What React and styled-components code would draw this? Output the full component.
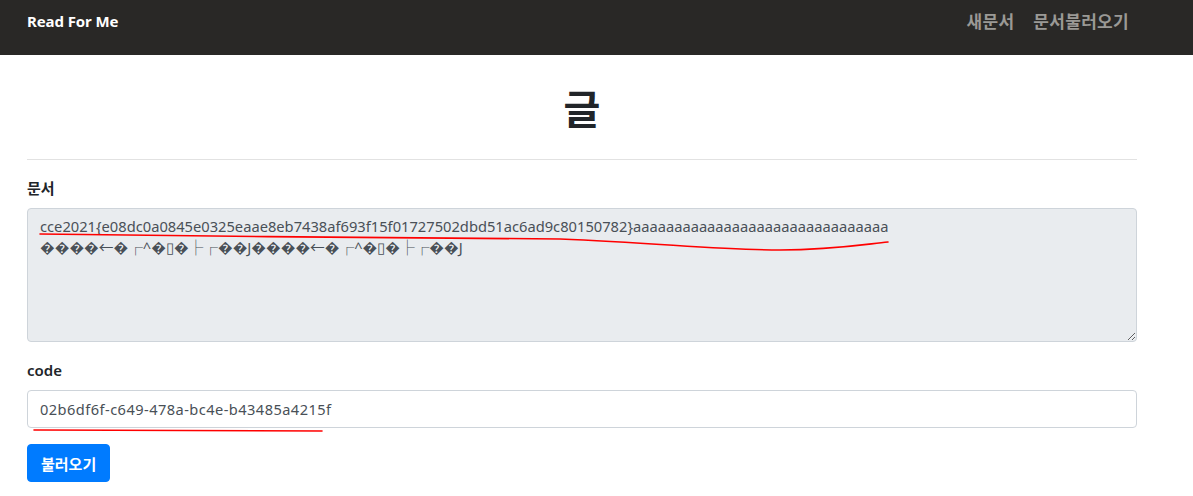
import React from 'react';
import styled, { createGlobalStyle } from 'styled-components';

const GlobalStyle = createGlobalStyle`
  body {
    margin: 0;
    background: #fff;
    font-family: "Noto Sans", "Noto Sans CJK KR", sans-serif;
    color: #212529;
  }
`

const DOC_TEXT =
  'cce2021{e08dc0a0845e0325eaae8eb7438af693f15f01727502dbd51ac6ad9c80150782}' +
  'a'.repeat(31) +
  '\n' +
  '����←�┌^�▯�├┌��J����←�┌^�▯�├┌��J'

const App = () => {
  return (
    <Page>
      <GlobalStyle />
      <NavBar>
        <Brand>Read For Me</Brand>
        <NavLinks>
          <NavLink>새문서</NavLink>
          <NavLink>문서불러오기</NavLink>
        </NavLinks>
      </NavBar>
      <Container>
        <Title>글</Title>
        <Divider />
        <Label>문서</Label>
        <TextArea readOnly value={DOC_TEXT} />
        <Label spaced>code</Label>
        <Input readOnly value="02b6df6f-c649-478a-bc4e-b43485a4215f" />
        <Button>불러오기</Button>
      </Container>
      {/* hand drawn red annotations on top of the screenshot */}
      <Marks width="1193" height="496" viewBox="0 0 1193 496">
        <path
          d="M40 234 C 200 237, 420 237, 560 239 C 660 243, 720 250, 780 250 C 830 250, 860 245, 888 242"
          fill="none" stroke="#ff0000" strokeWidth="1.6" strokeLinecap="round"
        />
        <path d="M34 430 L 322 431" fill="none" stroke="#ff0000" strokeWidth="1.6" strokeLinecap="round" />
      </Marks>
    </Page>
  )
}

const Page = styled.div`
  position: relative;
  width: 1193px;
  min-height: 496px;
`
const NavBar = styled.nav`
  height: 55px;
  background: #292826;
  display: flex;
  justify-content: space-between;
  align-items: flex-start;
  padding: 10px 64px 0 27px;
  box-sizing: border-box;
`
const Brand = styled.div`
  color: #fff;
  font-weight: 700;
  font-size: 15px;
  line-height: 22px;
  letter-spacing: -0.1px;
`
const NavLinks = styled.div`
  display: flex;
  gap: 19px;
`
const NavLink = styled.span`
  color: #9a9995;
  font-weight: 700;
  font-size: 17px;
  line-height: 22px;
  letter-spacing: 0.3px;
  font-family: "Noto Sans CJK KR", sans-serif;
`
const Container = styled.div`
  width: 1110px;
  margin-left: 27px;
  padding-bottom: 14px;
`
const Title = styled.h1`
  margin: 0;
  padding-top: 24px;
  height: 80px;
  box-sizing: border-box;
  text-align: center;
  font-size: 40px;
  line-height: 56px;
  font-weight: 700;
  font-family: "Noto Sans CJK KR", sans-serif;
  color: #212529;
`
const Divider = styled.hr`
  margin: 24px 0 0;
  border: 0;
  border-top: 1px solid #e2e2e2;
`
const Label = styled.div`
  margin-top: 17px;
  margin-bottom: 9px;
  font-size: 15px;
  line-height: 22px;
  font-weight: 600;
  color: #212529;
`
const TextArea = styled.textarea`
  display: block;
  width: 100%;
  height: 134px;
  box-sizing: border-box;
  padding: 7px 12px;
  background: #e9ecef;
  border: 1px solid #ced4da;
  border-radius: 4px;
  font-family: "Noto Sans", "Noto Sans CJK KR", sans-serif;
  font-size: 14.7px;
  line-height: 21px;
  color: #495057;
  resize: vertical;
  outline: none;
`
const Input = styled.input`
  display: block;
  width: 100%;
  height: 38px;
  box-sizing: border-box;
  padding: 6px 12px;
  background: #fff;
  border: 1px solid #ced4da;
  border-radius: 4px;
  font-family: "Noto Sans", sans-serif;
  font-size: 14.6px;
  letter-spacing: 0.45px;
  color: #495057;
  outline: none;
`
const Button = styled.button`
  display: block;
  margin-top: 16px;
  height: 38px;
  padding: 0 13px;
  background: #007bff;
  border: 1px solid #007bff;
  border-radius: 4px;
  color: #fff;
  font-weight: 700;
  font-size: 15px;
  font-family: "Noto Sans CJK KR", sans-serif;
`
const Marks = styled.svg`
  position: absolute;
  top: 0;
  left: 0;
  pointer-events: none;
`

export default App
